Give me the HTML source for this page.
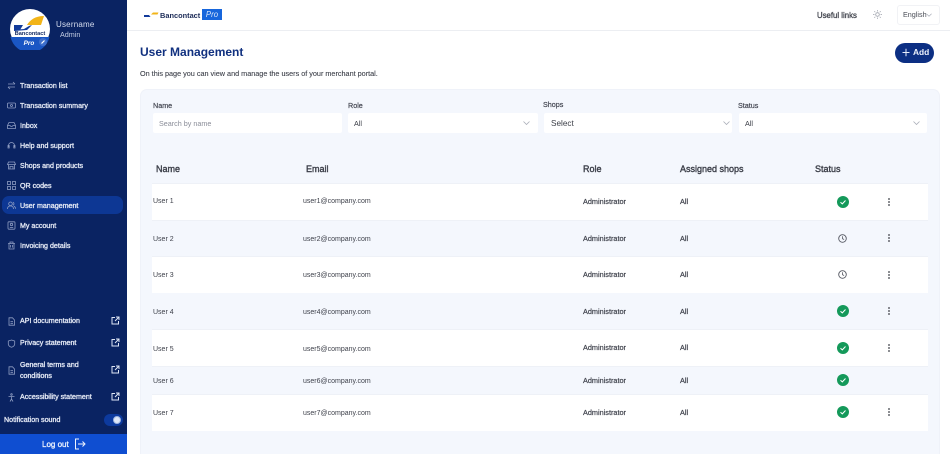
<!DOCTYPE html>
<html><head><meta charset="utf-8">
<style>
*{box-sizing:border-box}
html,body{margin:0;padding:0;width:950px;height:454px;overflow:hidden;background:#fff;font-family:"Liberation Sans",sans-serif;color:#33363f}
#wrap{position:relative;width:950px;height:454px;overflow:hidden;filter:blur(.25px)}
.a{position:absolute;white-space:nowrap}
#side{position:absolute;left:0;top:0;width:127px;height:454px;background:#0a2362}
.nav{position:absolute;left:20px;font-size:7.1px;-webkit-text-stroke:.32px #e4e9f5;color:#e4e9f5;line-height:10px;white-space:nowrap}
.ic{position:absolute;left:7px;width:9px;height:9px}
.ic *{fill:none;stroke:#8f9dc2;stroke-width:.8}
.ext{position:absolute;left:111px;width:9px;height:9px}
.ext *{fill:none;stroke:#dfe6f5;stroke-width:1}
.sel{position:absolute;top:113px;height:20px;background:#fff;border-radius:2px;font-size:7.8px;line-height:21px;padding-left:6px;color:#3a3d46}
.lb{position:absolute;top:101px;font-size:7.2px;-webkit-text-stroke:.2px #444752;color:#444752;line-height:9px}
.th{position:absolute;top:163px;font-size:9px;-webkit-text-stroke:.38px #3c3f49;color:#3c3f49;line-height:12px}
.row{position:absolute;left:152px;width:776px;background:#fff;border-top:1px solid #eef1f7}
.t{position:absolute;font-size:7px;line-height:10px;color:#3f424c;white-space:nowrap;margin-top:1px}
.b{font-size:7.3px;-webkit-text-stroke:.2px #3f424c;margin-top:0}
.chev{position:absolute;width:7px;height:4px}
.chev path{fill:none;stroke:#a9adb8;stroke-width:.8}
</style></head><body>
<div id="wrap">
<div id="side">
  <svg class="a" style="left:9px;top:8px" width="42" height="42" viewBox="0 0 42 42">
    <circle cx="21" cy="21" r="20" fill="#fff"/>
    <path d="M1.500 29h39a20 20 0 0 1-39 0z" fill="#1a56c4"/>
    <path d="M5 22l10-1 5-3 3-1-5 5-13 1z" fill="#123a9a"/>
    <path d="M5 17h9l-3 5H5z" fill="#123a9a"/>
    <path d="M18 17c3-5 8-9 17-9l-3 9z" fill="#f2b418"/>
    <text x="21" y="27" font-size="5.600" font-weight="bold" text-anchor="middle" fill="#132a63" font-family="Liberation Sans">Bancontact</text>
    <text x="20" y="37" font-size="6.400" font-weight="bold" font-style="italic" text-anchor="middle" fill="#fff" font-family="Liberation Sans">Pro</text>
    <circle cx="34" cy="34" r="4" fill="#3f6fcb"/>
    <path d="M32.500 35.500l3-3" stroke="#fff" stroke-width="1.200"/>
  </svg>
  <div class="a" style="left:56px;top:20px;font-size:8px;color:#d7deef;line-height:10px;letter-spacing:.2px">Username</div>
  <div class="a" style="left:60px;top:30px;font-size:7.200px;color:#c3cce2;line-height:10px">Admin</div>

  <div class="a" style="left:2px;top:196px;width:121px;height:18px;border-radius:7px;background:#0d3794"></div>

  <svg class="ic" style="top:81px" viewBox="0 0 9 9"><path d="M1 3h7M6 1l2 2M8 6H1M3 8L1 6"/></svg>
  <div class="nav" style="top:81px">Transaction list</div>
  <svg class="ic" style="top:101px" viewBox="0 0 9 9"><rect x=".5" y="2" width="8" height="5" rx="1"/><circle cx="4.500" cy="4.500" r="1"/></svg>
  <div class="nav" style="top:101px">Transaction summary</div>
  <svg class="ic" style="top:121px" viewBox="0 0 9 9"><path d="M2 1.500h5l1.500 3v3h-8v-3zM.5 4.500h2.500l1 1h1l1-1h2.500"/></svg>
  <div class="nav" style="top:121px">Inbox</div>
  <svg class="ic" style="top:141px" viewBox="0 0 9 9"><path d="M1.500 6V4.500a3 3 0 0 1 6 0V6M1 4.500h1.200v2.500H1zM6.800 4.500H8v2.500H6.800z"/></svg>
  <div class="nav" style="top:141px">Help and support</div>
  <svg class="ic" style="top:161px" viewBox="0 0 9 9"><path d="M1.500 1h6l1 2.500h-8zM1.500 3.500V8h6V3.500M3 8V5.500h3V8"/></svg>
  <div class="nav" style="top:161px">Shops and products</div>
  <svg class="ic" style="top:181px" viewBox="0 0 9 9"><rect x=".5" y=".5" width="3" height="3"/><rect x="5.500" y=".5" width="3" height="3"/><rect x=".5" y="5.500" width="3" height="3"/><path d="M5.500 5.500h3v3h-3z"/></svg>
  <div class="nav" style="top:181px">QR codes</div>
  <svg class="ic" style="top:201px" viewBox="0 0 9 9"><circle cx="3.500" cy="2.800" r="1.800"/><path d="M.5 8c0-2 1.300-3 3-3s3 1 3 3M6 1.200a1.800 1.800 0 0 1 0 3.200M7 5.300c1 .4 1.500 1.300 1.500 2.500"/></svg>
  <div class="nav" style="top:201px">User management</div>
  <svg class="ic" style="top:221px" viewBox="0 0 9 9"><rect x="1" y=".8" width="7" height="7.400" rx=".8"/><circle cx="4.500" cy="3.500" r="1.200"/><path d="M2.800 6.500h3.400"/></svg>
  <div class="nav" style="top:221px">My account</div>
  <svg class="ic" style="top:241px" viewBox="0 0 9 9"><path d="M1 2.500h7M3 2.500V1h3v1.500M2 2.500V8h5V2.500M3.500 4v2.500M5.500 4v2.500"/></svg>
  <div class="nav" style="top:241px">Invoicing details</div>

  <svg class="ic" style="top:317px" viewBox="0 0 9 9"><path d="M2 .8h3.500L7.500 3v5.200H2zM3.500 4.500h2.500M3.500 6.300h2.500"/></svg>
  <div class="nav" style="top:316px">API documentation</div>
  <svg class="ext" style="top:316px" viewBox="0 0 9 9"><path d="M4 1.500H1v6.500h6.500V5M5 1h3v3M8 1L4 5"/></svg>
  <svg class="ic" style="top:339px" viewBox="0 0 9 9"><path d="M4.500 1l3.200 1v3c0 1.700-1.500 2.700-3.200 3.200C2.800 7.700 1.300 6.700 1.300 5V2z"/></svg>
  <div class="nav" style="top:338px">Privacy statement</div>
  <svg class="ext" style="top:338px" viewBox="0 0 9 9"><path d="M4 1.500H1v6.500h6.500V5M5 1h3v3M8 1L4 5"/></svg>
  <svg class="ic" style="top:366px" viewBox="0 0 9 9"><path d="M2 .8h3.500L7.500 3v5.200H2zM3.500 4.500h2.500M3.500 6.300h2.500"/></svg>
  <div class="nav" style="top:360px;line-height:11px">General terms and<br>conditions</div>
  <svg class="ext" style="top:365px" viewBox="0 0 9 9"><path d="M4 1.500H1v6.500h6.500V5M5 1h3v3M8 1L4 5"/></svg>
  <svg class="ic" style="top:393px" viewBox="0 0 9 9"><circle cx="4.500" cy="1.500" r=".8"/><path d="M1.500 3.500h6M4.500 3.500v2.500M4.500 6L3 8.500M4.500 6L6 8.500"/></svg>
  <div class="nav" style="top:392px">Accessibility statement</div>
  <svg class="ext" style="top:392px" viewBox="0 0 9 9"><path d="M4 1.500H1v6.500h6.500V5M5 1h3v3M8 1L4 5"/></svg>

  <div class="nav" style="left:4px;top:415px">Notification sound</div>
  <div class="a" style="left:104px;top:414px;width:19px;height:12px;border-radius:6px;background:#0d3a9e"></div>
  <div class="a" style="left:113px;top:416px;width:8px;height:8px;border-radius:50%;background:#dfe8f8;border:1.500px solid #9fb6e0"></div>

  <div class="a" style="left:0;top:434px;width:127px;height:20px;background:#0f4ed1"></div>
  <div class="a" style="left:42px;top:439px;font-size:8px;line-height:11px;-webkit-text-stroke:.3px #eef3fd;color:#eef3fd">Log out</div>
  <svg class="a" style="left:74px;top:438px" width="12" height="12" viewBox="0 0 12 12"><path d="M5 1H1.500v10H5M4 6h7M8.500 3.500L11 6l-2.500 2.500" fill="none" stroke="#f0f4fd" stroke-width="1"/></svg>
</div>

<!-- header -->
<div class="a" style="left:127px;top:30px;width:823px;height:1px;background:#eceef2"></div>
<svg class="a" style="left:144px;top:11px" width="16" height="7" viewBox="0 0 16 7"><path d="M0 4h5l1.500 2H0z" fill="#123a9a"/><path d="M7 3.500l2-2h5.500l-1 2z" fill="#f2b418"/></svg>
<div class="a" style="left:160px;top:11px;font-size:7.400px;line-height:10px;font-weight:bold;color:#1d2c58">Bancontact</div>
<div class="a" style="left:202px;top:9px;width:20px;height:11px;background:#1766dc;color:#dbe8fb;font-size:7.800px;line-height:11px;font-style:italic;text-align:center">Pro</div>
<div class="a" style="left:817px;top:11px;font-size:7.800px;line-height:10px;-webkit-text-stroke:.3px #43464f;color:#43464f">Useful links</div>
<svg class="a" style="left:873px;top:10px" width="9" height="9" viewBox="0 0 9 9"><circle cx="4.500" cy="4.500" r="1.800" fill="none" stroke="#9ca0aa" stroke-width=".8"/><path d="M4.500 0v1.500M4.500 7.500V9M0 4.500h1.500M7.500 4.500H9M1.300 1.300l1 1M6.700 6.700l1 1M1.300 7.700l1-1M6.700 2.300l1-1" stroke="#9ca0aa" stroke-width=".7"/></svg>
<div class="a" style="left:897px;top:5px;width:43px;height:20px;border:1px solid #f1f2f5;border-radius:3px"></div>
<div class="a" style="left:903px;top:10px;font-size:7.200px;line-height:10px;color:#4a4d56">English</div>
<svg class="chev" style="left:926px;top:13px;width:6px" viewBox="0 0 7 4"><path d="M.5.500l3 3 3-3"/></svg>

<div class="a" style="left:140px;top:44px;font-size:12px;line-height:16px;font-weight:bold;color:#10307f">User Management</div>
<div class="a" style="left:140px;top:69px;font-size:7.250px;line-height:10px;color:#3d404a;-webkit-text-stroke:.1px #3d404a">On this page you can view and manage the users of your merchant portal.</div>

<div class="a" style="left:895px;top:43px;width:39px;height:20px;border-radius:10px;background:#0c2f83"></div>
<svg class="a" style="left:902px;top:48px" width="8" height="9" viewBox="0 0 8 9"><path d="M4 .8v7.400M.5 4.500h7" stroke="#e8eefb" stroke-width="1"/></svg>
<div class="a" style="left:913px;top:47px;font-size:8.400px;line-height:11px;font-weight:bold;color:#eef3fd">Add</div>

<!-- panel -->
<div class="a" style="left:140px;top:89px;width:800px;height:365px;background:#f4f7fd;border-radius:7px 7px 0 0;border:1px solid #eff2f9;border-bottom:0"></div>

<div class="lb" style="left:153px">Name</div>
<div class="lb" style="left:348px">Role</div>
<div class="lb" style="left:543px;top:100px">Shops</div>
<div class="lb" style="left:738px">Status</div>

<div class="sel" style="left:153px;width:189px;color:#8a8d98;font-size:7.200px">Search by name</div>
<div class="sel" style="left:348px;width:190px;font-size:7.200px">All</div>
<div class="sel" style="left:544px;width:188px;padding-left:7px;font-size:8.200px">Select</div>
<div class="sel" style="left:739px;width:188px;font-size:7.200px">All</div>
<svg class="chev" style="left:523px;top:121px" viewBox="0 0 7 4"><path d="M.5.500l3 3 3-3"/></svg>
<svg class="chev" style="left:723px;top:121px" viewBox="0 0 7 4"><path d="M.5.500l3 3 3-3"/></svg>
<svg class="chev" style="left:913px;top:121px" viewBox="0 0 7 4"><path d="M.5.500l3 3 3-3"/></svg>

<div class="th" style="left:156px">Name</div>
<div class="th" style="left:306px">Email</div>
<div class="th" style="left:583px">Role</div>
<div class="th" style="left:680px">Assigned shops</div>
<div class="th" style="left:815px">Status</div>

<div class="row" style="top:183px;height:37px"></div>
<div class="row" style="top:256px;height:37px"></div>
<div class="row" style="top:329px;height:37px"></div>
<div class="row" style="top:394px;height:37px"></div>
<div class="a" style="left:152px;top:220px;width:776px;height:1px;background:#eef1f7"></div>
<div class="a" style="left:152px;top:366px;width:776px;height:1px;background:#eef1f7"></div>

<!-- row text -->
<div class="t" style="left:153px;top:196px">User 1</div><div class="t" style="left:303px;top:196px">user1@company.com</div><div class="t b" style="left:583px;top:197px">Administrator</div><div class="t b" style="left:680px;top:197px">All</div>
<div class="t" style="left:153px;top:234px">User 2</div><div class="t" style="left:303px;top:234px">user2@company.com</div><div class="t b" style="left:583px;top:234px">Administrator</div><div class="t b" style="left:680px;top:234px">All</div>
<div class="t" style="left:153px;top:270px">User 3</div><div class="t" style="left:303px;top:270px">user3@company.com</div><div class="t b" style="left:583px;top:270px">Administrator</div><div class="t b" style="left:680px;top:270px">All</div>
<div class="t" style="left:153px;top:307px">User 4</div><div class="t" style="left:303px;top:307px">user4@company.com</div><div class="t b" style="left:583px;top:307px">Administrator</div><div class="t b" style="left:680px;top:307px">All</div>
<div class="t" style="left:153px;top:344px">User 5</div><div class="t" style="left:303px;top:344px">user5@company.com</div><div class="t b" style="left:583px;top:343px">Administrator</div><div class="t b" style="left:680px;top:343px">All</div>
<div class="t" style="left:153px;top:376px">User 6</div><div class="t" style="left:303px;top:376px">user6@company.com</div><div class="t b" style="left:583px;top:376px">Administrator</div><div class="t b" style="left:680px;top:376px">All</div>
<div class="t" style="left:153px;top:408px">User 7</div><div class="t" style="left:303px;top:408px">user7@company.com</div><div class="t b" style="left:583px;top:408px">Administrator</div><div class="t b" style="left:680px;top:408px">All</div>

<!-- status icons -->
<svg class="a" style="left:837px;top:196px" width="12" height="12" viewBox="0 0 12 12"><circle cx="6" cy="6" r="6" fill="#14995a"/><path d="M3.500 6.200l1.800 1.700 3.200-3.400" fill="none" stroke="#fff" stroke-width="1"/></svg>
<svg class="a" style="left:838px;top:234px" width="9" height="9" viewBox="0 0 9 9"><circle cx="4.500" cy="4.500" r="3.800" fill="none" stroke="#555862" stroke-width=".9"/><path d="M4.500 2.200v2.500l1.600.8" fill="none" stroke="#555862" stroke-width=".8"/></svg>
<svg class="a" style="left:838px;top:270px" width="9" height="9" viewBox="0 0 9 9"><circle cx="4.500" cy="4.500" r="3.800" fill="none" stroke="#555862" stroke-width=".9"/><path d="M4.500 2.200v2.500l1.600.8" fill="none" stroke="#555862" stroke-width=".8"/></svg>
<svg class="a" style="left:837px;top:305px" width="12" height="12" viewBox="0 0 12 12"><circle cx="6" cy="6" r="6" fill="#14995a"/><path d="M3.500 6.200l1.800 1.700 3.200-3.400" fill="none" stroke="#fff" stroke-width="1"/></svg>
<svg class="a" style="left:837px;top:342px" width="12" height="12" viewBox="0 0 12 12"><circle cx="6" cy="6" r="6" fill="#14995a"/><path d="M3.500 6.200l1.800 1.700 3.200-3.400" fill="none" stroke="#fff" stroke-width="1"/></svg>
<svg class="a" style="left:837px;top:374px" width="12" height="12" viewBox="0 0 12 12"><circle cx="6" cy="6" r="6" fill="#14995a"/><path d="M3.500 6.200l1.800 1.700 3.200-3.400" fill="none" stroke="#fff" stroke-width="1"/></svg>
<svg class="a" style="left:837px;top:406px" width="12" height="12" viewBox="0 0 12 12"><circle cx="6" cy="6" r="6" fill="#14995a"/><path d="M3.500 6.200l1.800 1.700 3.200-3.400" fill="none" stroke="#fff" stroke-width="1"/></svg>

<!-- kebabs -->
<svg class="a" style="left:887px;top:198px" width="4" height="8" viewBox="0 0 4 8"><path d="M2 .2v1.600M2 3.200v1.600M2 6.200v1.600" stroke="#34373f" stroke-width="1.500"/></svg>
<svg class="a" style="left:887px;top:234px" width="4" height="8" viewBox="0 0 4 8"><path d="M2 .2v1.600M2 3.200v1.600M2 6.200v1.600" stroke="#34373f" stroke-width="1.500"/></svg>
<svg class="a" style="left:887px;top:271px" width="4" height="8" viewBox="0 0 4 8"><path d="M2 .2v1.600M2 3.200v1.600M2 6.200v1.600" stroke="#34373f" stroke-width="1.500"/></svg>
<svg class="a" style="left:887px;top:307px" width="4" height="8" viewBox="0 0 4 8"><path d="M2 .2v1.600M2 3.200v1.600M2 6.200v1.600" stroke="#34373f" stroke-width="1.500"/></svg>
<svg class="a" style="left:887px;top:344px" width="4" height="8" viewBox="0 0 4 8"><path d="M2 .2v1.600M2 3.200v1.600M2 6.200v1.600" stroke="#34373f" stroke-width="1.500"/></svg>
<svg class="a" style="left:887px;top:408px" width="4" height="8" viewBox="0 0 4 8"><path d="M2 .2v1.600M2 3.200v1.600M2 6.200v1.600" stroke="#34373f" stroke-width="1.500"/></svg>
</div>
</body></html>
